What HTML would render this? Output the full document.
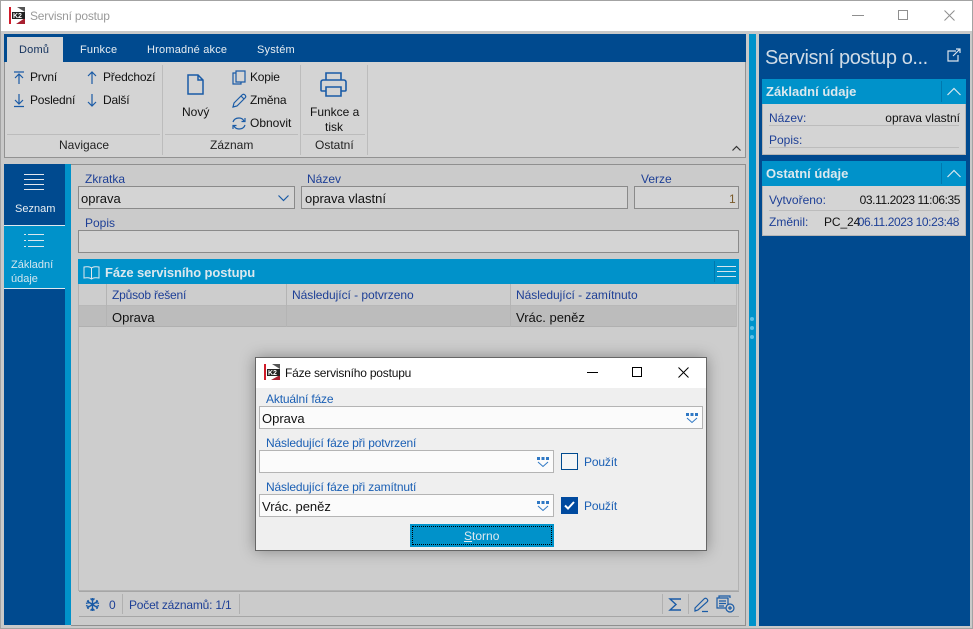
<!DOCTYPE html>
<html><head><meta charset="utf-8"><style>
html,body{margin:0;padding:0}
body{width:973px;height:629px;overflow:hidden;position:relative;background:#c9c9c9;font-family:"Liberation Sans",sans-serif;font-size:12px;color:#111}
div,span,svg{position:absolute;box-sizing:border-box}
.t{white-space:nowrap;line-height:16px}
.n{letter-spacing:-.2px}
.b{color:#1d3f96}
.w{color:#e8eef2}
.f{background:#d4d4d4;border:1px solid #8a8a8a}
.sep{background:#bcbcbc}
svg{fill:none;stroke:#1a5ba6;stroke-width:1.2;overflow:visible}
.dl{color:#1a5fb4;letter-spacing:-.15px}
.df{background:#fbfbfb;border:1px solid #b4b4b4}
.dt{letter-spacing:-.42px}
.tab{font-size:11px;letter-spacing:.2px}
.h{color:#dbe8ee;font-weight:bold;font-size:13px}
.logo text{stroke:none;fill:#fff;font-family:"Liberation Sans",sans-serif;font-weight:bold;font-size:7px}
.dd rect{fill:#2f78c4;stroke:none}
</style></head><body>
<div style="left:0;top:0;width:973px;height:629px;border:1px solid #a3a3a3"></div>
<div style="left:1px;top:1px;width:971px;height:30px;background:#fff"></div>
<svg class="logo" style="left:9px;top:7px;width:16px;height:17px;stroke:none"><rect width="16" height="17" fill="#fff"/><rect width="2" height="17" fill="#d01c2a"/><path d="M8 0L16 0L16 5Z" fill="#555"/><path d="M7 17L16 17L16 11Z" fill="#a82030"/><rect x="3" y="5" width="13" height="7" fill="#222"/><text x="4" y="11">K2</text></svg>
<div class="t n" style="left:30px;top:8px;color:#9a9a9a">Servisní postup</div>
<svg style="left:852px;top:15px;width:12px;height:2px;stroke:#8f8f8f;stroke-width:1"><path d="M0 .5H12"/></svg>
<div style="left:898px;top:10px;width:10px;height:10px;border:1px solid #8f8f8f"></div>
<svg style="left:944px;top:10px;width:11px;height:11px;stroke:#8f8f8f;stroke-width:1"><path d="M.5 .5L10.5 10.5M10.5 .5L.5 10.5"/></svg>

<!-- ribbon -->
<div style="left:4px;top:34px;width:742px;height:28px;background:#004a8f"></div>
<div style="left:4px;top:62px;width:742px;height:96px;background:#d4d4d4;border:1px solid #929292;border-top:0"></div>
<div style="left:7px;top:37px;width:56px;height:25px;background:#d4d4d4"></div>
<div class="t tab" style="left:19px;top:42px;color:#12305c">Domů</div>
<div class="t w tab" style="left:80px;top:42px">Funkce</div>
<div class="t w tab" style="left:147px;top:42px">Hromadné akce</div>
<div class="t w tab" style="left:257px;top:42px">Systém</div>

<svg style="left:13px;top:71px;width:12px;height:13px"><path d="M1 1H11M6 13V3M2 7L6 3L10 7"/></svg>
<div class="t n" style="left:30px;top:69px">První</div>
<svg style="left:86px;top:71px;width:12px;height:13px"><path d="M6 13V1M2 5L6 1L10 5"/></svg>
<div class="t n" style="left:103px;top:69px">Předchozí</div>
<svg style="left:13px;top:94px;width:12px;height:13px"><path d="M1 12.500H11M6 0V10M2 6L6 10L10 6"/></svg>
<div class="t n" style="left:30px;top:92px">Poslední</div>
<svg style="left:86px;top:94px;width:12px;height:13px"><path d="M6 0V12M2 8L6 12L10 8"/></svg>
<div class="t n" style="left:103px;top:92px">Další</div>
<div class="sep" style="left:7px;top:134px;width:153px;height:1px"></div>
<div class="t" style="left:59px;top:137px;color:#222">Navigace</div>
<div class="sep" style="left:162px;top:65px;width:1px;height:90px"></div>

<svg style="left:187px;top:74px;width:17px;height:21px;stroke-width:1.5"><path d="M1 1H11L16 6V20H1ZM11 1V6H16"/></svg>
<div class="t" style="left:182px;top:104px">Nový</div>
<svg style="left:232px;top:70px;width:14px;height:15px"><path d="M4 1H13V12H4ZM4 3H1V14H9V12"/></svg>
<div class="t n" style="left:250px;top:69px">Kopie</div>
<svg style="left:232px;top:93px;width:14px;height:15px"><path d="M1 14L2 10L10 2C11 1 12 1 13 2C14 3 14 4 13 5L5 13ZM9 3L12 6"/></svg>
<div class="t n" style="left:250px;top:92px">Změna</div>
<svg style="left:232px;top:116px;width:14px;height:15px"><path d="M1 6C2 3 4 2 7 2C9 2 11 3 12 5M13 2V5.500H9.500M13 9C12 12 10 13 7 13C5 13 3 12 2 10M1 13V9.500H4.500"/></svg>
<div class="t" style="left:250px;top:115px">Obnovit</div>
<div class="sep" style="left:165px;top:134px;width:133px;height:1px"></div>
<div class="t" style="left:210px;top:137px;color:#222">Záznam</div>
<div class="sep" style="left:300px;top:65px;width:1px;height:90px"></div>

<svg style="left:320px;top:72px;width:27px;height:25px;stroke-width:1.6"><path d="M6 8V1H21V8M6 19H2C1 19 1 18 1 18V10C1 9 2 8 3 8H24C25 8 26 9 26 10V18C26 19 25 19 25 19H21M6 15H21V24H6Z"/></svg>
<div class="t" style="left:310px;top:104px">Funkce a</div>
<div class="t" style="left:325px;top:119px">tisk</div>
<div class="sep" style="left:303px;top:134px;width:62px;height:1px"></div>
<div class="t" style="left:315px;top:137px;color:#222">Ostatní</div>
<div class="sep" style="left:367px;top:65px;width:1px;height:90px"></div>
<svg style="left:732px;top:146px;width:9px;height:5px;stroke:#333"><path d="M.5 4.500L4.500 .5L8.500 4.500"/></svg>

<!-- left nav -->
<div style="left:4px;top:164px;width:62px;height:461px;background:#004a8f"></div>
<div style="left:4px;top:225px;width:61px;height:64px;background:#0092ca;border-top:1px solid #e0e8ee;border-bottom:1px solid #e0e8ee"></div>
<div style="left:65px;top:164px;width:6px;height:461px;background:#0092ca"></div>
<svg style="left:24px;top:174px;width:20px;height:17px;stroke:#e4e8ee;stroke-width:1"><path d="M0 .5H20M0 5.500H20M0 10.500H20M0 15.500H20"/></svg>
<div class="t w" style="left:15px;top:201px;font-size:11px">Seznam</div>
<svg style="left:24px;top:234px;width:20px;height:14px;stroke:#dce8ee;stroke-width:1"><path d="M0 .5H2M4 .5H20M0 6.500H2M4 6.500H20M0 12.500H2M4 12.500H20"/></svg>
<div class="t" style="left:11px;top:258px;font-size:11px;color:#d3e6ef;line-height:14px;white-space:normal;width:50px">Základní údaje</div>

<!-- content -->
<div style="left:71px;top:164px;width:675px;height:462px;background:#cbcbcb;border:1px solid #8f8f8f;border-left:0"></div>
<div class="t b" style="left:85px;top:171px">Zkratka</div>
<div class="f" style="left:78px;top:186px;width:217px;height:23px"></div>
<div class="t" style="left:81px;top:191px;color:#111;font-size:13px">oprava</div>
<svg style="left:278px;top:195px;width:11px;height:6px"><path d="M.5 .5L5.500 5.500L10.500 .5"/></svg>
<div class="t b" style="left:307px;top:171px">Název</div>
<div class="f" style="left:301px;top:186px;width:327px;height:23px"></div>
<div class="t" style="left:305px;top:191px;font-size:13px">oprava vlastní</div>
<div class="t b" style="left:641px;top:171px">Verze</div>
<div class="f" style="left:634px;top:186px;width:105px;height:23px"></div>
<div class="t" style="left:729px;top:191px;color:#7a5a2a">1</div>
<div class="t b" style="left:85px;top:215px">Popis</div>
<div class="f" style="left:78px;top:230px;width:661px;height:23px"></div>

<div style="left:78px;top:259px;width:661px;height:25px;background:#0092ca"></div>
<svg style="left:83px;top:266px;width:17px;height:15px;stroke:#e0e8ee;stroke-width:1"><path d="M8.500 2C7 .5 3 .5 1 1V12C3 11.500 7 11.500 8.500 13C10 11.500 14 11.500 16 12V1C14 .5 10 .5 8.500 2ZM8.500 2V13"/></svg>
<div class="t h" style="left:105px;top:265px;letter-spacing:-.1px">Fáze servisního postupu</div>
<div style="left:714px;top:261px;width:1px;height:21px;background:#0078ae"></div>
<svg style="left:717px;top:266px;width:19px;height:12px;stroke:#d5e6ee;stroke-width:1"><path d="M0 .5H19M0 5.500H19M0 10.500H19"/></svg>

<div style="left:78px;top:284px;width:661px;height:307px;background:#cdcdcd;border:1px solid #b2b2b2;border-top:0"></div>
<div style="left:79px;top:305px;width:657px;height:1px;background:#b8b8b8"></div>
<div style="left:79px;top:306px;width:657px;height:21px;background:#bcbcbc;border-bottom:1px solid #b0b0b0"></div>
<div style="left:736px;top:284px;width:1px;height:43px;background:#b8b8b8"></div>
<div style="left:106px;top:284px;width:1px;height:43px;background:#b4b4b4"></div>
<div style="left:286px;top:284px;width:1px;height:43px;background:#b4b4b4"></div>
<div style="left:510px;top:284px;width:1px;height:43px;background:#b4b4b4"></div>
<div class="t b n" style="left:112px;top:287px">Způsob řešení</div>
<div class="t b" style="left:292px;top:287px;letter-spacing:-.05px">Následující - potvrzeno</div>
<div class="t b" style="left:516px;top:287px;letter-spacing:-.05px">Následující - zamítnuto</div>
<div class="t" style="left:112px;top:310px;font-size:13px">Oprava</div>
<div class="t" style="left:516px;top:310px;font-size:13px">Vrác. peněz</div>

<!-- status -->
<div style="left:79px;top:591px;width:660px;height:26px;background:#cbcbcb;border-top:1px solid #a6a6a6;border-bottom:1px solid #a6a6a6"></div>
<svg style="left:85px;top:597px;width:15px;height:15px;stroke-width:1.4"><path d="M7.500 1V14M2 4L13 11M13 4L2 11M5.500 1.500L7.500 3.500L9.500 1.500M5.500 13.500L7.500 11.500L9.500 13.500M1 6.500L3.500 5.500L3 3M14 6.500L11.500 5.500L12 3M1 8.500L3.500 9.500L3 12M14 8.500L11.500 9.500L12 12"/></svg>
<div class="t b" style="left:109px;top:597px">0</div>
<div class="sep" style="left:122px;top:594px;width:1px;height:20px;background:#b0b0b0"></div>
<div class="t b n" style="left:129px;top:597px">Počet záznamů: 1/1</div>
<div class="sep" style="left:239px;top:594px;width:1px;height:20px;background:#b0b0b0"></div>
<div class="sep" style="left:662px;top:594px;width:1px;height:20px;background:#b0b0b0"></div>
<svg style="left:669px;top:598px;width:13px;height:13px;stroke-width:1.4"><path d="M12 1H1L7 6.500L1 12H12"/></svg>
<div class="sep" style="left:688px;top:594px;width:1px;height:20px;background:#b0b0b0"></div>
<svg style="left:694px;top:597px;width:15px;height:15px"><path d="M1 11L10 2C11 1 12 1 13 2C14 3 14 4 13 5L4 13L1 14ZM8 14.500H14"/></svg>
<svg style="left:716px;top:595px;width:19px;height:18px"><path d="M3 3V1H14V3M1 3H12V13H1ZM3 6H10M3 8.500H10M3 11H8"/><circle cx="14" cy="13" r="4" fill="#cbcbcb"/><path d="M12 13H16M14 11V15"/></svg>

<!-- splitter -->
<div style="left:749px;top:34px;width:7px;height:592px;background:#0092ca"></div>
<div style="left:750px;top:317px;width:4px;height:4px;background:#5cc0e8;border-radius:50%"></div>
<div style="left:750px;top:326px;width:4px;height:4px;background:#5cc0e8;border-radius:50%"></div>
<div style="left:750px;top:335px;width:4px;height:4px;background:#5cc0e8;border-radius:50%"></div>

<!-- right panel -->
<div style="left:759px;top:34px;width:211px;height:592px;background:#004a8f"></div>
<div class="t" style="left:765px;top:46px;font-size:20px;line-height:24px;color:#cfdbe6;letter-spacing:-.42px">Servisní postup o...</div>
<svg style="left:947px;top:48px;width:14px;height:14px;stroke:#dbe4ec"><path d="M9 3H1V13H11V7M6 8L13 1M9 1H13V5"/></svg>
<div style="left:762px;top:79px;width:204px;height:76px;background:#d4d4d4;border:1px solid #b5b5b5;border-top:0"></div>
<div style="left:762px;top:79px;width:204px;height:25px;background:#0092ca"></div>
<div class="t h" style="left:766px;top:84px">Základní údaje</div>
<div style="left:941px;top:81px;width:1px;height:21px;background:#0078ae"></div>
<svg style="left:947px;top:88px;width:14px;height:8px;stroke:#dbe8ee"><path d="M.5 7L7 .5L13.500 7"/></svg>
<div class="t b" style="left:769px;top:110px">Název:</div>
<div class="t" style="right:13px;top:110px">oprava vlastní</div>
<div class="sep" style="left:769px;top:125px;width:190px;height:1px"></div>
<div class="t b" style="left:769px;top:132px">Popis:</div>
<div class="sep" style="left:769px;top:147px;width:190px;height:1px"></div>

<div style="left:762px;top:161px;width:204px;height:75px;background:#d4d4d4;border:1px solid #b5b5b5;border-top:0"></div>
<div style="left:762px;top:161px;width:204px;height:25px;background:#0092ca"></div>
<div class="t h" style="left:766px;top:166px">Ostatní údaje</div>
<div style="left:941px;top:163px;width:1px;height:21px;background:#0078ae"></div>
<svg style="left:947px;top:170px;width:14px;height:8px;stroke:#dbe8ee"><path d="M.5 7L7 .5L13.500 7"/></svg>
<div class="t b" style="left:769px;top:192px">Vytvořeno:</div>
<div class="t dt" style="right:13px;top:192px">03.11.2023 11:06:35</div>
<div class="sep" style="left:769px;top:210px;width:190px;height:1px"></div>
<div class="t b" style="left:769px;top:214px">Změnil:</div>
<div class="t" style="left:824px;top:214px;letter-spacing:-.1px">PC_24</div>
<div class="t b dt" style="right:14px;top:214px">06.11.2023 10:23:48</div>

<!-- dialog -->
<div style="left:255px;top:357px;width:452px;height:194px;background:#efefef;border:1px solid #666;box-shadow:0 0 14px rgba(0,0,0,.35)"></div>
<div style="left:256px;top:358px;width:450px;height:30px;background:#fff"></div>
<svg class="logo" style="left:264px;top:364px;width:16px;height:16px;stroke:none"><rect width="16" height="16" fill="#fff"/><rect width="2" height="16" fill="#d01c2a"/><path d="M8 0L16 0L16 5Z" fill="#555"/><path d="M7 16L16 16L16 11Z" fill="#a82030"/><rect x="3" y="5" width="13" height="7" fill="#222"/><text x="4" y="11">K2</text></svg>
<div class="t n" style="left:285px;top:365px;color:#111">Fáze servisního postupu</div>
<svg style="left:587px;top:372px;width:11px;height:2px;stroke:#000;stroke-width:1"><path d="M0 .5H11"/></svg>
<div style="left:632px;top:367px;width:10px;height:10px;border:1px solid #000"></div>
<svg style="left:678px;top:367px;width:11px;height:11px;stroke:#000;stroke-width:1"><path d="M.5 .5L10.500 10.500M10.500 .5L.5 10.500"/></svg>

<div class="t dl" style="left:266px;top:391px">Aktuální fáze</div>
<div class="df" style="left:259px;top:406px;width:444px;height:23px"></div>
<div class="t" style="left:262px;top:411px;font-size:13px">Oprava</div>
<svg class="dd" style="left:686px;top:413px;width:12px;height:10px;stroke:#2f78c4;stroke-width:1"><rect x="0" y="0" width="3" height="3"/><rect x="4.500" y="0" width="3" height="3"/><rect x="9" y="0" width="3" height="3"/><path d="M1 5L6 9.500L11 5"/></svg>

<div class="t dl" style="left:266px;top:435px">Následující fáze při potvrzení</div>
<div class="df" style="left:259px;top:450px;width:295px;height:23px"></div>
<svg class="dd" style="left:537px;top:457px;width:12px;height:10px;stroke:#2f78c4;stroke-width:1"><rect x="0" y="0" width="3" height="3"/><rect x="4.500" y="0" width="3" height="3"/><rect x="9" y="0" width="3" height="3"/><path d="M1 5L6 9.500L11 5"/></svg>
<div style="left:561px;top:453px;width:17px;height:17px;border:1px solid #004a8f;background:#f5f5f5"></div>
<div class="t dl" style="left:584px;top:454px">Použít</div>

<div class="t dl" style="left:266px;top:479px">Následující fáze při zamítnutí</div>
<div class="df" style="left:259px;top:494px;width:295px;height:23px"></div>
<div class="t" style="left:262px;top:499px;font-size:13px">Vrác. peněz</div>
<svg class="dd" style="left:537px;top:501px;width:12px;height:10px;stroke:#2f78c4;stroke-width:1"><rect x="0" y="0" width="3" height="3"/><rect x="4.500" y="0" width="3" height="3"/><rect x="9" y="0" width="3" height="3"/><path d="M1 5L6 9.500L11 5"/></svg>
<div style="left:561px;top:497px;width:17px;height:17px;background:#004a9f"></div>
<svg style="left:564px;top:501px;width:11px;height:9px;stroke:#fff;stroke-width:2"><path d="M1 4.500L4 7.500L10 1"/></svg>
<div class="t dl" style="left:584px;top:498px">Použít</div>

<div style="left:410px;top:524px;width:144px;height:23px;background:#0092ca"></div>
<div style="left:412px;top:526px;width:140px;height:19px;border:1px dotted #fff;outline:1px dotted #000;outline-offset:-1px"></div>
<div class="t" style="left:464px;top:528px;color:#dfeaf0"><u>S</u>torno</div>
</body></html>
